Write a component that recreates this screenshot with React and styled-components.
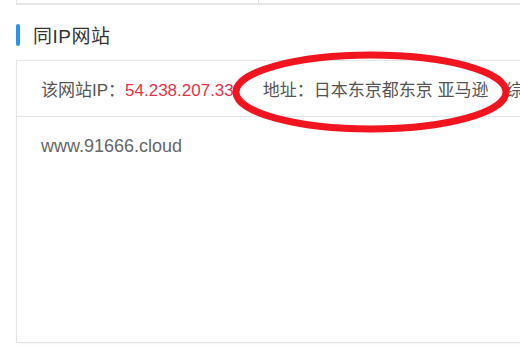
import React from 'react';
import styled, { createGlobalStyle } from 'styled-components';

const GlobalStyle = createGlobalStyle`
	html, body {
		margin: 0;
		padding: 0;
		background: #fff;
		overflow: hidden;
	}
	body {
		font-family: 'Liberation Sans', Arial, 'Noto Sans CJK SC', sans-serif;
	}
`;

const App = () => {
	return (
		<Page>
			<GlobalStyle />
			<TopBox>
				<TopCell />
			</TopBox>
			<SectionTitle>同IP网站</SectionTitle>
			<Panel>
				<InfoRow>
					<InfoItem gap={29}>
						该网站IP：<Red>54.238.207.33</Red>
					</InfoItem>
					<InfoItem gap={17}>地址：日本东京都东京 亚马逊</InfoItem>
					<InfoItem gap={0}>综</InfoItem>
				</InfoRow>
				<SiteList>
					<SiteLink>www.91666.cloud</SiteLink>
				</SiteList>
			</Panel>
			<Mark viewBox="0 0 520 350" width="520" height="350">
				<ellipse
					cx="371"
					cy="92"
					rx="135"
					ry="37"
					fill="none"
					stroke="#f2141f"
					strokeWidth="7"
				/>
			</Mark>
		</Page>
	);
};

const Page = styled.div`
	position: relative;
	width: 520px;
	height: 350px;
	padding-left: 16px;
	box-sizing: border-box;
	overflow: hidden;
	color: #555;
`;

const TopBox = styled.div`
	display: flex;
	height: 3px;
	border-left: 1px solid #e3e3e8;
	border-bottom: 2px solid #e6e6ea;
`;

const TopCell = styled.div`
	width: 241px;
	border-right: 1px solid #e3e3e8;
`;

const SectionTitle = styled.h2`
	margin: 0;
	height: 55px;
	padding-top: 4px;
	box-sizing: border-box;
	display: flex;
	align-items: center;
	gap: 13px;
	font-size: 19px;
	font-weight: normal;
	color: #333;
	letter-spacing: 0.5px;

	&::before {
		content: '';
		width: 4px;
		height: 22px;
		border-radius: 2px;
		background: #2b93e8;
	}
`;

const Panel = styled.div`
	border: 1px solid #e3e3e8;
	border-right: none;
	border-top: 1px solid #e6e6ea;
	height: 283px;
	box-sizing: border-box;
	box-shadow: 0 1px 2px rgba(0, 0, 0, 0.04);
`;

const InfoRow = styled.div`
	display: flex;
	align-items: center;
	height: 55px;
	padding-left: 24px;
	border-bottom: 1px solid #e3e3e8;
	font-size: 17px;
	white-space: nowrap;
	overflow: hidden;
`;

const InfoItem = styled.span`
	margin-right: ${props => props.gap}px;
	color: #555;
`;

const Red = styled.span`
	color: #e5324a;
`;

const SiteList = styled.div`
	padding: 17px 24px;
`;

const SiteLink = styled.div`
	font-size: 18px;
	color: #666;
	line-height: 24px;
`;

const Mark = styled.svg`
	position: absolute;
	left: 0;
	top: 0;
	pointer-events: none;
`;

export default App;
